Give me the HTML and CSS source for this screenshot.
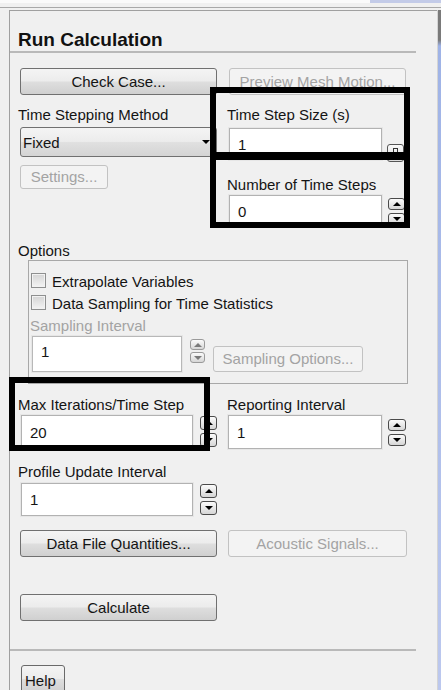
FILE: index.html
```html
<!DOCTYPE html>
<html>
<head>
<meta charset="utf-8">
<title>Run Calculation</title>
<link rel="stylesheet" href="styles.css">
</head>
<body>
<div class="topbar"><div class="topbar-blue"></div></div>
<div class="frame">
  <div class="panel">
    <div class="inner">
      <div class="title">Run Calculation</div>

      <div class="btn-row">
        <button class="btn w197">Check Case...</button>
        <button class="btn disabled w177">Preview Mesh Motion...</button>
      </div>

      <div class="cols top-cols">
        <div class="col-left">
          <div class="label">Time Stepping Method</div>
          <div class="dropdown"><span>Fixed</span><span class="tri-down"></span></div>
          <button class="btn disabled settings">Settings...</button>
        </div>
        <div class="col-right">
          <div class="label">Time Step Size (s)</div>
          <div class="inrow r1">
            <div class="input w153 h32">1</div>
            <div class="spin-single"><span class="mini-rect"></span></div>
          </div>
          <div class="label lbl-nts">Number of Time Steps</div>
          <div class="inrow r2">
            <div class="input w153 h32">0</div>
            <div class="spinner sp-r"><div class="spin-btn up"></div><div class="spin-btn down"></div></div>
          </div>
        </div>
      </div>

      <div class="label options-label">Options</div>
      <div class="group">
        <div class="check-row"><span class="checkbox"></span><span>Extrapolate Variables</span></div>
        <div class="check-row"><span class="checkbox"></span><span>Data Sampling for Time Statistics</span></div>
        <div class="label dim samp-label">Sampling Interval</div>
        <div class="samp-row">
          <div class="input disabled-in samp-in">1</div>
          <div class="spinner dis samp-spin"><div class="spin-btn up"></div><div class="spin-btn down"></div></div>
          <button class="btn disabled samp-btn">Sampling Options...</button>
        </div>
      </div>

      <div class="cols iter-cols">
        <div class="col-left">
          <div class="label">Max Iterations/Time Step</div>
          <div class="inrow r3">
            <div class="input w172 h34">20</div>
            <div class="spinner sp-l"><div class="spin-btn up"></div><div class="spin-btn down"></div></div>
          </div>
        </div>
        <div class="col-right">
          <div class="label">Reporting Interval</div>
          <div class="inrow r4">
            <div class="input w154 h34">1</div>
            <div class="spinner sp-r2"><div class="spin-btn up"></div><div class="spin-btn down"></div></div>
          </div>
        </div>
      </div>

      <div class="cols prof-cols">
        <div class="col-left">
          <div class="label">Profile Update Interval</div>
          <div class="inrow r5">
            <div class="input w172 h33">1</div>
            <div class="spinner sp-l"><div class="spin-btn up"></div><div class="spin-btn down"></div></div>
          </div>
        </div>
      </div>

      <div class="btn-row dfq-row">
        <button class="btn w197">Data File Quantities...</button>
        <button class="btn disabled w179">Acoustic Signals...</button>
      </div>

      <div class="btn-row calc-row">
        <button class="btn w197">Calculate</button>
      </div>

      <div class="separator"></div>

      <button class="btn help">Help</button>
    </div>
  </div>
  <div class="scroll"></div>
</div>

<div class="annot a1"></div>
<div class="annot a2"></div>
<div class="annot a3"></div>
</body>
</html>
```

FILE: styles.css
```css
* { box-sizing: border-box; }
html, body { margin: 0; padding: 0; }
body {
  width: 441px;
  height: 690px;
  overflow: hidden;
  position: relative;
  background: #f0f0f0;
  font-family: "Liberation Sans", Arial, sans-serif;
  font-size: 15px;
  color: #141414;
}

.topbar {
  height: 8px;
  background: linear-gradient(to bottom, #fafafa 0, #fafafa 3px, #f0f0f0 3px);
  border-bottom: 1px solid #a8a8a8;
  display: flex;
  justify-content: flex-end;
}
.topbar-blue { width: 71px; height: 3px; background: #c3cbe8; }

.frame {
  display: flex;
  margin-top: 2px;
  padding-left: 9px;
  height: 680px;
}
.panel {
  flex: 0 0 428px;
  border-top: 1px solid #a0a0a0;
  border-left: 1px solid #a0a0a0;
}
.scroll {
  flex: 1;
  border-left: 1px solid #d4d4d4;
  background: linear-gradient(to bottom, #7a7a7a 0, #7a7a7a 30px, #9fb3e6 36px, #bcc8ee 100%);
}

.inner { width: 406px; }

.title {
  margin-top: 18px;
  height: 24px;
  padding-left: 8px;
  font-weight: bold;
  font-size: 19px;
  line-height: 22px;
  color: #111;
  border-bottom: 2px solid #b9b9b9;
}

.btn {
  display: block;
  height: 27px;
  padding: 0;
  border: 1px solid #707070;
  border-radius: 3px;
  background: linear-gradient(to bottom, #f4f4f4 0%, #ececec 48%, #dedede 52%, #d0d0d0 100%);
  font-family: inherit;
  font-size: 15px;
  line-height: 25px;
  color: #141414;
  text-align: center;
  white-space: nowrap;
  overflow: hidden;
}
.btn.disabled {
  border-color: #c2c2c2;
  background: #f3f3f3;
  color: #a3a3a3;
}
.w197 { width: 197px; }
.w177 { width: 177px; }
.w179 { width: 179px; }

.btn-row {
  display: flex;
  gap: 12px;
  margin-top: 15px;
  padding-left: 10px;
}

.cols { display: flex; padding-left: 8px; }
.col-left { width: 209px; flex: 0 0 209px; }
.col-right { flex: 1; }
.top-cols { margin-top: 11px; }

.label { height: 17px; line-height: 17px; white-space: nowrap; }
.dim { color: #a3a3a3; }

.dropdown {
  margin-top: 4px;
  margin-left: 2px;
  width: 197px;
  height: 30px;
  border: 1px solid #707070;
  border-radius: 3px;
  background: linear-gradient(to bottom, #f4f4f4 0%, #ececec 48%, #e0e0e0 52%, #d4d4d4 100%);
  display: flex;
  align-items: center;
  justify-content: space-between;
  padding: 0 6px 0 2px;
}
.tri-down {
  width: 0; height: 0;
  border-left: 4px solid transparent;
  border-right: 4px solid transparent;
  border-top: 4px solid #000;
}
.settings {
  margin-top: 8px;
  margin-left: 2px;
  width: 88px;
  height: 24px;
  line-height: 22px;
}

.inrow { display: flex; align-items: flex-start; margin-left: 2px; }
.input {
  background: #fff;
  border: 1px solid #b2b2b2;
  box-shadow: 0 0 0 1px #e6e6e6;
  padding-left: 8px;
  display: flex;
  align-items: center;
  color: #141414;
}
.w153 { width: 153px; }
.w154 { width: 154px; }
.w172 { width: 172px; }
.h32 { height: 32px; }
.h33 { height: 33px; }
.h34 { height: 34px; }

.r1 { margin-top: 5px; }
.lbl-nts { margin-top: 14px; }
.r2 { margin-top: 2px; }

.spin-single {
  margin-left: 5px;
  margin-top: 16px;
  width: 17px;
  height: 18px;
  border: 1px solid #555;
  border-radius: 3px;
  background: linear-gradient(#fafafa, #dcdcdc);
  display: flex;
  justify-content: center;
  padding-top: 3px;
}
.mini-rect { width: 5px; height: 8px; border: 1px solid #333; }

.spinner {
  display: flex;
  flex-direction: column;
  gap: 3px;
  width: 17px;
}
.spin-btn {
  height: 12px;
  border: 1px solid #4a4a4a;
  border-radius: 3px;
  background: linear-gradient(#fbfbfb, #d6d6d6);
  display: flex;
  align-items: center;
  justify-content: center;
}
.spin-btn.up::after {
  content: "";
  width: 0; height: 0;
  border-left: 4px solid transparent;
  border-right: 4px solid transparent;
  border-bottom: 4px solid #000;
}
.spin-btn.down::after {
  content: "";
  width: 0; height: 0;
  border-left: 4px solid transparent;
  border-right: 4px solid transparent;
  border-top: 4px solid #000;
}
.spinner.dis .spin-btn { border-color: #9a9a9a; }
.spinner.dis .spin-btn.up::after { border-bottom-color: #7a7a7a; }
.spinner.dis .spin-btn.down::after { border-top-color: #7a7a7a; }

.sp-r { margin-left: 6px; margin-top: 3px; }
.sp-l { margin-left: 7px; margin-top: 1px; }
.sp-l .spin-btn { height: 14px; }
.sp-r2 { margin-left: 6px; margin-top: 4px; width: 18px; }

.options-label { margin-top: 15px; padding-left: 8px; }
.group {
  margin-top: 1px;
  margin-left: 18px;
  width: 380px;
  border: 1px solid #a8a8a8;
  padding: 12px 0 11px 2px;
}
.check-row {
  display: flex;
  align-items: flex-start;
  height: 22px;
  line-height: 17px;
  white-space: nowrap;
}
.checkbox {
  width: 15px;
  height: 15px;
  margin-right: 6px;
  border: 1px solid #8e8f8f;
  background: linear-gradient(to bottom, #d4d4d4, #f4f4f4);
  box-shadow: inset 0 0 0 1px #f2f2f2;
}
.samp-label { margin-left: -1px; }
.samp-row { display: flex; align-items: flex-start; margin-top: 2px; }
.disabled-in { border-color: #b8b8b8; }
.samp-in { margin-left: 1px; width: 150px; height: 36px; padding-left: 8px; align-items: flex-start; padding-top: 6px; }
.samp-spin { margin-left: 8px; margin-top: 3px; width: 15px; gap: 2px; }
.samp-spin .spin-btn { height: 11px; }
.samp-btn { margin-left: 8px; margin-top: 10px; width: 150px; height: 26px; line-height: 24px; }

.iter-cols { margin-top: 12px; }
.r3 { margin-top: 2px; margin-left: 3px; }
.r4 { margin-top: 2px; margin-left: 1px; }
.prof-cols { margin-top: 14px; }
.r5 { margin-top: 3px; margin-left: 3px; }

.dfq-row { margin-top: 14px; gap: 11px; }
.calc-row { margin-top: 37px; }

.separator {
  margin-top: 28px;
  height: 2px;
  background: #b9b9b9;
}

.btn.help {
  margin-top: 14px;
  margin-left: 11px;
  width: 44px;
  height: 28px;
  border-color: #6a6a6a;
  text-align: left;
  padding: 3px 0 0 3px;
  line-height: 17px;
}

.annot {
  position: absolute;
  border: 6px solid #000;
}
.a1 { left: 210px; top: 87px; width: 200px; height: 71px; }
.a2 { left: 210px; top: 154px; width: 200px; height: 74px; }
.a3 { left: 9px; top: 377px; width: 201px; height: 74px; }
```
